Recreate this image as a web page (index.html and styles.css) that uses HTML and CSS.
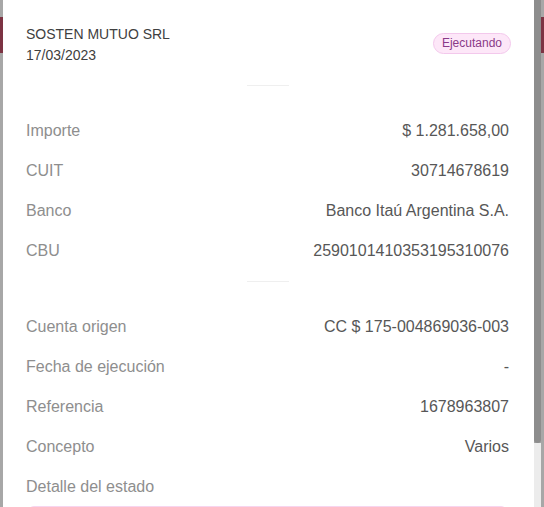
FILE: index.html
```html
<!DOCTYPE html>
<html lang="es">
<head>
<meta charset="utf-8">
<title>Detalle</title>
<link rel="stylesheet" href="styles.css">
</head>
<body>
<div class="screen">
  <div class="card">
    <div class="header">
      <div class="who">
        <div class="name">SOSTEN MUTUO SRL</div>
        <div class="date">17/03/2023</div>
      </div>
      <span class="badge">Ejecutando</span>
    </div>
    <div class="divider first"></div>
    <div class="rows">
      <div class="row"><span class="label">Importe</span><span class="value">$ 1.281.658,00</span></div>
      <div class="row"><span class="label">CUIT</span><span class="value">30714678619</span></div>
      <div class="row"><span class="label">Banco</span><span class="value">Banco Itaú Argentina S.A.</span></div>
      <div class="row"><span class="label">CBU</span><span class="value">2590101410353195310076</span></div>
    </div>
    <div class="divider second"></div>
    <div class="rows">
      <div class="row"><span class="label">Cuenta origen</span><span class="value">CC $ 175-004869036-003</span></div>
      <div class="row"><span class="label">Fecha de ejecución</span><span class="value">-</span></div>
      <div class="row"><span class="label">Referencia</span><span class="value">1678963807</span></div>
      <div class="row"><span class="label">Concepto</span><span class="value">Varios</span></div>
      <div class="row"><span class="label">Detalle del estado</span><span class="value"></span></div>
    </div>
    <div class="status-box"></div>
  </div>
  <div class="scrollbar">
    <div class="thumb"></div>
    <div class="track"></div>
  </div>
</div>
</body>
</html>
```
FILE: styles.css
```css
html, body {
  margin: 0;
  padding: 0;
}
body {
  width: 544px;
  height: 507px;
  overflow: hidden;
  font-family: "Liberation Sans", Arial, sans-serif;
  background: linear-gradient(to bottom, #a7a7a7 0, #a7a7a7 17px, #7c3343 17px, #7c3343 53px, #a7a7a7 53px);
}
.screen {
  display: flex;
  height: 507px;
  padding: 0 3px;
  box-sizing: border-box;
}
.card {
  flex: 1;
  background: #fff;
  padding: 24px 25px 0 23px;
  box-sizing: border-box;
  overflow: hidden;
}
.header {
  display: flex;
  justify-content: space-between;
  align-items: flex-start;
}
.name, .date {
  font-size: 14px;
  line-height: 21px;
  color: #404040;
}
.badge {
  margin-top: 9px;
  margin-right: -2px;
  font-size: 12px;
  line-height: 19px;
  padding: 0 8px;
  border: 1px solid #f3c8ec;
  background: #fde7f8;
  color: #8a3a88;
  border-radius: 11px;
}
.divider {
  width: 42px;
  height: 1px;
  background: #efefef;
  margin: 0 auto 25px;
}
.divider.first {
  margin-top: 19px;
}
.divider.second {
  margin-top: 10px;
}
.row {
  height: 40px;
  display: flex;
  justify-content: space-between;
  align-items: center;
  font-size: 16px;
}
.label {
  color: #8e8e8e;
}
.value {
  color: #575757;
}
.status-box {
  margin: -1px 2px 0;
  height: 40px;
  border: 1px solid #f7d5ef;
  background: #fdf3fb;
  border-radius: 6px;
}
.scrollbar {
  width: 7px;
  display: flex;
  flex-direction: column;
}
.thumb {
  height: 443px;
  background: #8d8d8d;
  border-radius: 0 0 4px 4px;
}
.track {
  flex: 1;
  background: #ececec;
}
```
